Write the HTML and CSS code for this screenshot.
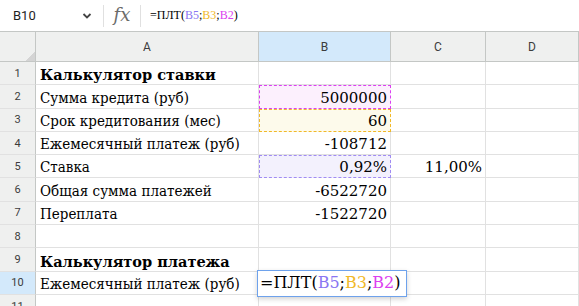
FILE: index.html
```html
<!DOCTYPE html>
<html lang="ru">

<head>
    <meta charset="UTF-8">
    <meta name="viewport" content="width=device-width, initial-scale=1.0">
    <title>Калькулятор</title>
    <link rel="stylesheet" href="styles.css">
</head>

<body>
    <div class="formula-bar">
        <div class="name-box">B10</div>
        <svg class="chevron" width="10" height="8" viewBox="0 0 10 8">
            <path d="M1.5 2 L5 5.5 L8.5 2" fill="none" stroke="#444" stroke-width="1.8" />
        </svg>
        <div class="divider"></div>
        <div class="fx">fx</div>
        <div class="divider"></div>
        <div class="formula">=ПЛТ(<span class="ref-b5">B5</span>;<span class="ref-b3">B3</span>;<span class="ref-b2">B2</span>)</div>
    </div>

    <div class="sheet">
        <div class="grid">
            <div class="corner"></div>
            <div class="col-head">A</div>
            <div class="col-head active">B</div>
            <div class="col-head">C</div>
            <div class="col-head">D</div>

            <div class="row-head">1</div>
            <div class="cell bold">Калькулятор ставки</div>
            <div class="cell"></div><div class="cell"></div><div class="cell"></div>

            <div class="row-head">2</div>
            <div class="cell label">Сумма кредита (руб)</div>
            <div class="cell num hl-pink">5000000</div>
            <div class="cell"></div><div class="cell"></div>

            <div class="row-head">3</div>
            <div class="cell label">Срок кредитования (мес)</div>
            <div class="cell num hl-yellow">60</div>
            <div class="cell"></div><div class="cell"></div>

            <div class="row-head">4</div>
            <div class="cell label">Ежемесячный платеж (руб)</div>
            <div class="cell num">-108712</div>
            <div class="cell"></div><div class="cell"></div>

            <div class="row-head">5</div>
            <div class="cell label">Ставка</div>
            <div class="cell num hl-violet">0,92%</div>
            <div class="cell num">11,00%</div>
            <div class="cell"></div>

            <div class="row-head">6</div>
            <div class="cell label">Общая сумма платежей</div>
            <div class="cell num">-6522720</div>
            <div class="cell"></div><div class="cell"></div>

            <div class="row-head">7</div>
            <div class="cell label">Переплата</div>
            <div class="cell num">-1522720</div>
            <div class="cell"></div><div class="cell"></div>

            <div class="row-head">8</div>
            <div class="cell"></div><div class="cell"></div><div class="cell"></div><div class="cell"></div>

            <div class="row-head">9</div>
            <div class="cell bold">Калькулятор платежа</div>
            <div class="cell"></div><div class="cell"></div><div class="cell"></div>

            <div class="row-head active">10</div>
            <div class="cell label">Ежемесячный платеж (руб)</div>
            <div class="cell"></div><div class="cell"></div><div class="cell"></div>

            <div class="row-head">11</div>
            <div class="cell"></div><div class="cell"></div><div class="cell"></div><div class="cell"></div>
        </div>

        <div class="editor">=ПЛТ(<span class="ref-b5">B5</span>;<span class="ref-b3">B3</span>;<span class="ref-b2">B2</span>)</div>
    </div>
</body>

</html>
```

FILE: styles.css
```css
:root {
    --grid: #e1e1e1;
    --head-line: #c4c7c5;
    --head-bg: #eff0ef;
    --active-bg: #d3e9fb;
}

* {
    box-sizing: border-box;
}

body {
    margin: 0;
    background: #fff;
    font-family: Roboto, "Noto Sans", sans-serif;
    overflow: hidden;
}

.formula-bar {
    height: 32px;
    display: flex;
    align-items: center;
    border-bottom: 1px solid var(--head-line);
}

.name-box {
    width: 82px;
    padding-left: 13px;
    font-size: 13px;
    color: #1f1f1f;
}

.chevron {
    margin-right: 11px;
}

.divider {
    width: 1px;
    height: 22px;
    background: #e0e0e0;
}

.fx {
    width: 36px;
    text-align: center;
    font-family: "DejaVu Serif", serif;
    font-style: italic;
    font-size: 18px;
    color: #6b6b6b;
    padding-bottom: 3px;
}

.formula {
    padding-left: 9px;
    font-family: "Liberation Serif", serif;
    font-size: 12px;
    color: #000;
}

.ref-b5 {
    color: #8a76f2;
}

.ref-b3 {
    color: #f1b928;
}

.ref-b2 {
    color: #db40f0;
}

.sheet {
    position: relative;
}

.grid {
    display: grid;
    grid-template-columns: 36px 223px 132px 95px 93px;
    grid-template-rows: 30px;
    grid-auto-rows: 23.3px;
}

.corner,
.col-head,
.row-head {
    background: var(--head-bg);
    color: #3c3c3c;
    display: flex;
    align-items: center;
    justify-content: center;
}

.corner {
    border-right: 1px solid var(--head-line);
    border-bottom: 1px solid var(--head-line);
    background: linear-gradient(135deg, transparent 85%, #d4d4d4 85%) var(--head-bg);
}

.col-head {
    font-size: 12px;
    border-right: 1px solid var(--head-line);
    border-bottom: 1px solid var(--head-line);
}

.row-head {
    font-size: 11px;
    border-right: 1px solid var(--head-line);
    border-bottom: 1px solid var(--grid);
}

.active {
    background: var(--active-bg);
}

.cell {
    border-right: 1px solid var(--grid);
    border-bottom: 1px solid var(--grid);
    font-family: "DejaVu Serif", serif;
    font-size: 15px;
    color: #000;
    padding: 0 3px 1px 4px;
    display: flex;
    align-items: flex-end;
    white-space: nowrap;
}

.label {
    font-family: "DejaVu Serif Condensed", "Liberation Serif", serif;
    font-stretch: semi-condensed;
}

.bold {
    font-weight: bold;
    font-size: 14.5px;
}

.num {
    justify-content: flex-end;
}

.hl-pink {
    background: #fcf0fd;
    border: 1px dashed #db40f0;
}

.hl-yellow {
    background: #fdfaeb;
    border: 1px dashed #f1b928;
}

.hl-violet {
    background: #f3f1fd;
    border: 1px dashed #a08cf2;
}

.editor {
    position: absolute;
    left: 257px;
    top: 238px;
    width: 150px;
    height: 27px;
    background: #fff;
    border: 1px solid #6ea2ec;
    box-shadow: 0 2px 5px rgba(0, 0, 0, 0.18);
    font-family: "DejaVu Serif", serif;
    font-size: 16px;
    padding: 0 0 2px 2px;
    display: flex;
    align-items: center;
}
```
